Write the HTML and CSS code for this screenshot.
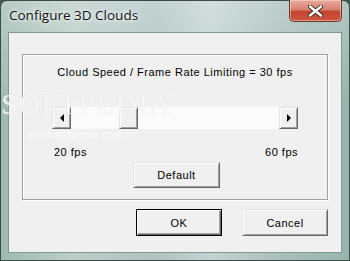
FILE: index.html
```html
<!DOCTYPE html>
<html lang="en">
<head>
  <meta charset="UTF-8">
  <title>Configure 3D Clouds</title>
  <link rel="stylesheet" href="styles.css">
</head>
<body>

  <!-- Ventana -->
  <div class="window">
    <div class="titlebar">
      <span class="title">Configure 3D Clouds</span>
      <div class="close-btn">
        <svg width="15" height="12" viewBox="0 0 15 12">
          <path d="M2 1.5 L13 10.5 M13 1.5 L2 10.5" stroke="#3a2a2a" stroke-width="4.2" stroke-linecap="round"/>
          <path d="M2 1.5 L13 10.5 M13 1.5 L2 10.5" stroke="#ffffff" stroke-width="2.4" stroke-linecap="round"/>
        </svg>
      </div>
    </div>

    <!-- Área de cliente -->
    <div class="client">
      <div class="groupbox">
        <div class="caption">Cloud Speed / Frame Rate Limiting = 30 fps</div>

        <div class="slider">
          <div class="arrow-btn">
            <svg width="6" height="8" viewBox="0 0 6 8"><path d="M5 0 L5 8 L1 4 Z" fill="#000"/></svg>
          </div>
          <div class="track">
            <div class="thumb"></div>
          </div>
          <div class="arrow-btn">
            <svg width="6" height="8" viewBox="0 0 6 8"><path d="M1 0 L1 8 L5 4 Z" fill="#000"/></svg>
          </div>
        </div>

        <div class="range">
          <span>20 fps</span>
          <span>60 fps</span>
        </div>

        <div class="btn default-btn">Default</div>
      </div>

      <div class="actions">
        <div class="btn primary">OK</div>
        <div class="btn">Cancel</div>
      </div>

      <!-- Marca de agua -->
      <div class="watermark">SOFTPEDIA<sup>™</sup></div>
      <div class="watermark-url">www.softpedia.com</div>
    </div>
  </div>

</body>
</html>
```

FILE: styles.css
```css
/* Estilos Generales */
body {
  margin: 0;
  padding: 0;
  width: 350px;
  height: 261px;
  overflow: hidden;
  background: #3d5a4a;
  font-family: 'Liberation Sans', Arial, sans-serif;
}

/* Marco de la ventana (vidrio) */
.window {
  width: 350px;
  height: 261px;
  box-sizing: border-box;
  border: 1px solid #3c4a48;
  border-radius: 7px 7px 0 0;
  background:
    linear-gradient(180deg, rgba(255,255,255,0.25) 0%, rgba(255,255,255,0) 40%),
    linear-gradient(90deg, #9fbab3 0%, #b9cdc9 20%, #aec3c2 45%, #c2d3d4 60%, #a9bfbd 80%, #98b3ad 100%);
  display: flex;
  flex-direction: column;
}

.titlebar {
  height: 30px;
  display: flex;
  justify-content: space-between;
  align-items: flex-start;
}

.title {
  font-family: 'Open Sans', 'Noto Sans', sans-serif;
  font-size: 13.5px;
  color: #111;
  padding: 5px 0 0 8px;
  text-shadow: 0 0 6px rgba(255,255,255,0.9), 0 0 3px rgba(255,255,255,0.9);
}

.close-btn {
  width: 53px;
  height: 22px;
  margin-right: 7px;
  margin-top: -1px;
  box-sizing: border-box;
  border: 1px solid #6a3a32;
  border-top: none;
  border-radius: 0 0 5px 5px;
  background: linear-gradient(180deg, #e8ab9e 0%, #d98270 45%, #c4452e 55%, #cc563f 100%);
  box-shadow: inset 0 0 0 1px rgba(255,220,210,0.5);
  display: flex;
  align-items: center;
  justify-content: center;
}

/* Área de cliente */
.client {
  position: relative;
  margin: 1px 7px 0 7px;
  height: 221px;
  box-sizing: border-box;
  border: 1px solid #7f9a95;
  background: #f0f0f0;
  padding: 21px 13px 0 13px;
  font-size: 11px;
  letter-spacing: 0.5px;
  color: #000;
}

/* Cuadro de grupo */
.groupbox {
  height: 146px;
  box-sizing: border-box;
  border: 1px solid #a0a0a0;
  box-shadow: inset 1px 1px 0 #fff, 1px 1px 0 #fff;
  padding: 11px 29px 0 29px;
  display: flex;
  flex-direction: column;
}

.caption {
  text-align: center;
  height: 14px;
}

/* Barra de desplazamiento */
.slider {
  margin-top: 27px;
  height: 22px;
  display: flex;
}

.arrow-btn, .thumb, .btn {
  box-sizing: border-box;
  background: #f0f0f0;
  border: 1px solid;
  border-color: #e3e3e3 #696969 #696969 #e3e3e3;
  box-shadow: inset 1px 1px 0 #fff, inset -1px -1px 0 #a0a0a0;
}

.arrow-btn {
  width: 19px;
  height: 22px;
  display: flex;
  align-items: center;
  justify-content: center;
}

.track {
  flex: 1;
  background: #fbfbfb;
  padding-left: 48px;
}

.thumb {
  width: 19px;
  height: 22px;
}

.range {
  margin-top: 17px;
  height: 13px;
  display: flex;
  justify-content: space-between;
  padding: 0 0 0 2px;
}

/* Botones */
.btn {
  width: 87px;
  height: 27px;
  display: flex;
  align-items: center;
  justify-content: center;
}

.default-btn {
  margin: 3px 0 0 81px;
  height: 26px;
}

.btn.primary {
  border-color: #000;
  box-shadow: inset 1px 1px 0 #fff, inset -1px -1px 0 #696969, inset -2px -2px 0 #a0a0a0;
}

.actions {
  margin-top: 9px;
  padding-left: 114px;
  display: flex;
  gap: 20px;
}

/* Marca de agua */
.watermark {
  position: absolute;
  left: -8px;
  top: 54px;
  font-family: 'Liberation Serif', serif;
  font-size: 30px;
  letter-spacing: 1px;
  color: rgba(255,255,255,0.75);
  text-shadow: 0 0 1px rgba(200,200,200,0.5);
  pointer-events: none;
}

.watermark sup {
  font-size: 8px;
  vertical-align: top;
}

.watermark-url {
  position: absolute;
  left: 19px;
  top: 95px;
  font-size: 11px;
  letter-spacing: 0;
  color: rgba(255,255,255,0.8);
  pointer-events: none;
}
```
